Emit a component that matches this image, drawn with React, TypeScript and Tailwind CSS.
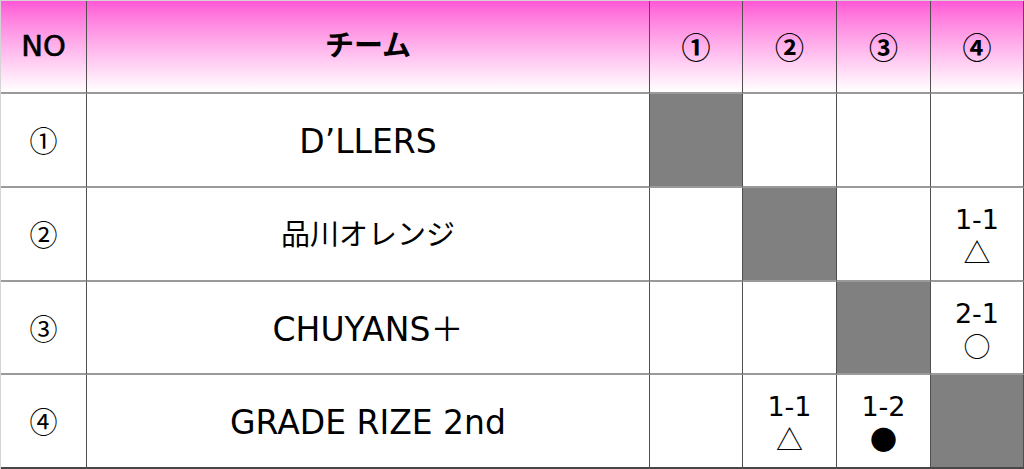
const teams = [
  { no: "①", name: "D’LLERS", jp: false, results: ["x", "", "", ""] },
  { no: "②", name: "品川オレンジ", jp: true, results: ["", "x", "", "1-1\n△"] },
  { no: "③", name: "CHUYANS＋", jp: false, results: ["", "", "x", "2-1\n○"] },
  { no: "④", name: "GRADE RIZE 2nd", jp: false, results: ["", "1-1\n△", "1-2\n●", "x"] },
];

const heads = ["①", "②", "③", "④"];

const line = "border-r border-r-[#4f4f4f] border-b-2 border-b-[#9a9a9a]";
const lastLine = "border-r border-r-[#4f4f4f] border-b-2 border-b-[#474747]";
const jpFont = "font-['Noto_Sans_CJK_JP',sans-serif]";

function Cell({ value, last }: { value: string; last: boolean }) {
  if (value === "x") {
    return <div className={`bg-[#808080] ${last ? lastLine : line}`} />;
  }
  const [score, mark] = value.split("\n");
  return (
    <div className={`flex flex-col items-center justify-center leading-[32px] pt-1 text-[27px] ${last ? lastLine : line}`}>
      {score && <span>{score}</span>}
      {mark && <span className={`${jpFont} text-[27px] leading-[32px]`}>{mark}</span>}
    </div>
  );
}

export default function App() {
  return (
    <div
      className="w-[1024px] h-[469px] bg-white text-black text-[28px] border-t border-l border-[#d4d4d4]"
      style={{ fontFamily: '"DejaVu Sans", "Noto Sans CJK JP", sans-serif' }}
    >
      <div className="grid grid-cols-[86px_563px_93px_94px_94px_93px] grid-rows-[93px_94px_94px_93px_94px] h-full">
        <div className={`flex items-center justify-center text-[29px] bg-gradient-to-b from-[#ff58d6] to-white ${line}`}>
          <span className="[-webkit-text-stroke:0.6px_black]">NO</span>
        </div>
        <div className={`flex items-center justify-center font-bold text-[29px] bg-gradient-to-b from-[#ff58d6] to-white ${line}`}>
          チーム
        </div>
        {heads.map((h) => (
          <div
            key={h}
            className={`flex items-center justify-center font-bold text-[29px] ${jpFont} bg-gradient-to-b from-[#ff58d6] to-white ${line}`}
          >
            {h}
          </div>
        ))}

        {teams.map((t, i) => {
          const last = i === teams.length - 1;
          return (
            <div key={t.no} className="contents">
              <div className={`flex items-center justify-center text-[28px] ${jpFont} ${last ? lastLine : line}`}>{t.no}</div>
              <div
                className={`flex items-center justify-center pt-1 ${t.jp ? "text-[29px]" : "text-[33px]"} ${
                  last ? lastLine : line
                }`}
              >
                {t.name}
              </div>
              {t.results.map((r, j) => (
                <Cell key={j} value={r} last={last} />
              ))}
            </div>
          );
        })}
      </div>
    </div>
  );
}
